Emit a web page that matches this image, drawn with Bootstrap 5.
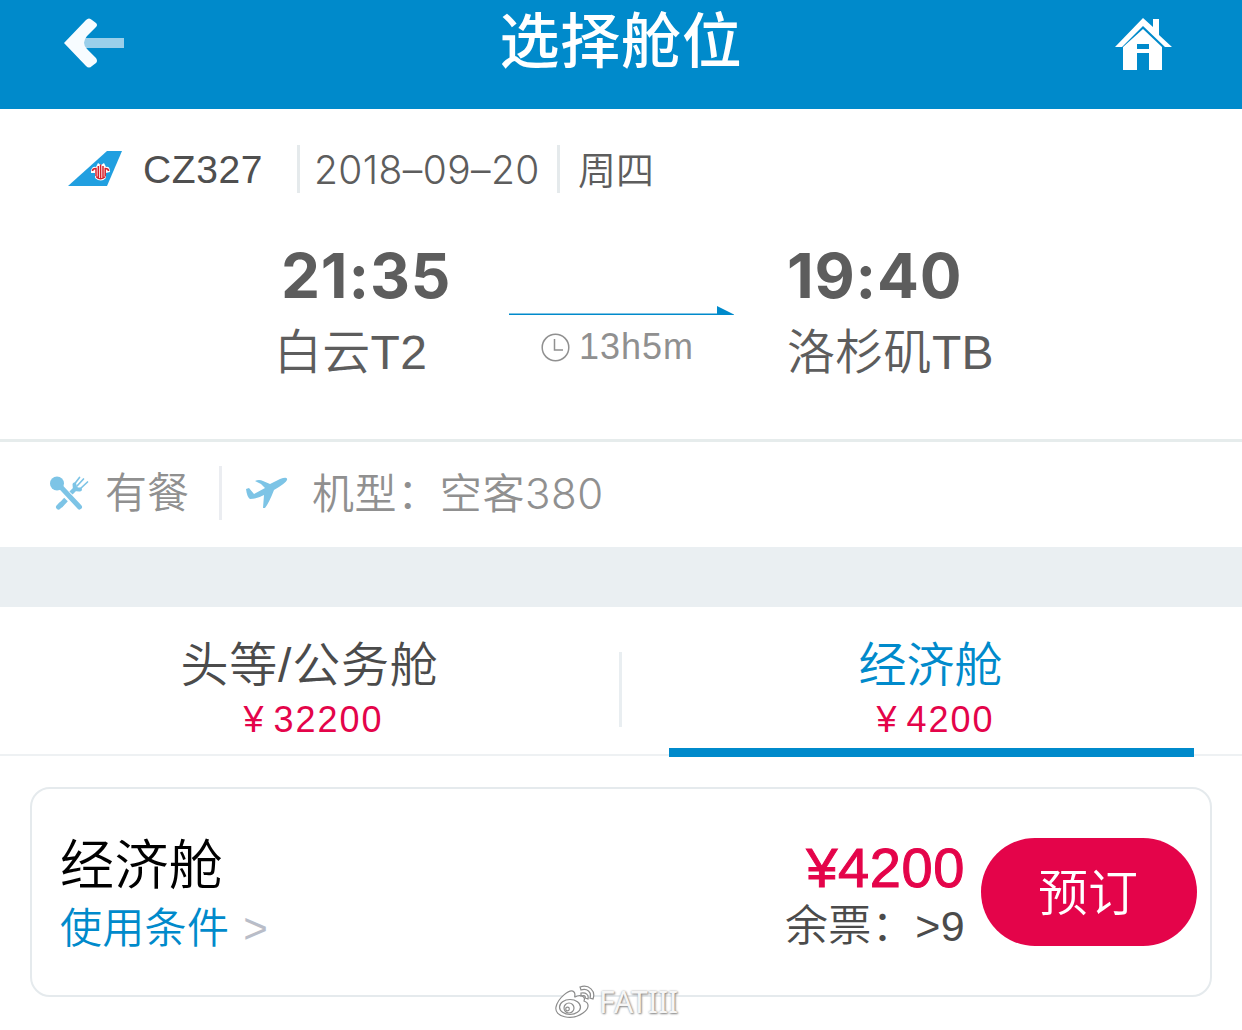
<!DOCTYPE html>
<html lang="zh-CN">

<head>
  <meta charset="UTF-8">
  <meta name="viewport" content="width=device-width, initial-scale=1.0">
  <title>选择舱位</title>
  <link href="https://cdn.jsdelivr.net/npm/bootstrap@5.3.3/dist/css/bootstrap.min.css" rel="stylesheet">
  <style>
    :root {
      --sky: #008acb;
      --rose: #e4044a;
      --line: #e5eaec;
    }

    body {
      font-family: "Liberation Sans", "Noto Sans CJK SC", sans-serif;
      font-weight: 350;
      color: #5d5d5d;
      height: 1030px;
      overflow: hidden;
      white-space: nowrap;
    }

    svg { display: block; flex: none; }

    /* header */
    .top-bar { height: 109px; padding: 0 70px 0 64px; background: var(--sky); }
    .top-bar svg { margin-top: 18px; }
    .page-title { font-size: 60px; font-weight: 500; line-height: 80px; letter-spacing: .8px; padding: 3px 0 0 3px; }

    /* flight summary */
    .flight { height: 333px; border-bottom: 3px solid #e6ecec; }
    .flight-head { height: 48px; margin-top: 36px; padding-left: 68px; font-size: 38px; line-height: 50px; }
    .flight-logo { margin-top: 6px; }
    .flight-no { width: 154px; margin-left: 21px; font-size: 39px; color: #4f4f4f; letter-spacing: .6px; }
    .flight-date { width: 263px; padding-left: 14px; border-left: 3px solid var(--line); border-right: 3px solid var(--line); font-family: Inter, sans-serif; font-size: 39px; font-weight: 300; letter-spacing: .4px; }
    .flight-day { padding: 1px 0 0 18px; }
    .flight-route { margin-top: 48px; padding-left: 274px; }
    .stop-from { width: 235px; }
    .stop-mid { width: 278px; padding-top: 65px; }
    .stop-time { font-family: Inter, sans-serif; font-size: 62px; font-weight: 700; line-height: 70px; letter-spacing: .8px; }
    .stop-from .stop-time { padding-left: 7px; }
    .stop-name { font-size: 48px; line-height: 60px; margin-top: 12px; letter-spacing: .3px; }
    .duration { font-size: 36px; line-height: 40px; color: #909090; margin: 11px 0 0 32px; letter-spacing: 1px; }
    .duration svg { margin-right: 9px; }

    /* meal and aircraft */
    .extras { height: 105px; padding: 0 0 3px 50px; font-size: 42px; color: #909090; }
    .extras-meal { width: 172px; height: 54px; border-right: 3px solid #ebedf1; }
    .extras span { padding-top: 1px; }
    .extras-plane { letter-spacing: .6px; }
    .extras-model { font-family: Inter, sans-serif; }
    .gap-band { height: 60px; background: #eaeff2; }

    /* cabin tabs */
    .cabins { height: 150px; }
    .cabins-line { height: 149px; border-bottom: 2px solid #eef1f3; }
    .cabin { height: 149px; text-align: center; }
    .cabin-name { font-size: 48px; line-height: 60px; margin-top: 29px; color: #4b4b4b; }
    .cabin-first .cabin-name { letter-spacing: .8px; }
    .cabin-price { font-size: 36px; line-height: 40px; margin-top: 4px; padding-left: 8px; color: var(--rose); letter-spacing: 2px; word-spacing: -4px; }
    .cabin-first { width: 619px; }
    .cabin-split { width: 3px; height: 75px; margin-top: 45px; background: #e9eef1; }
    .cabin-eco { width: 525px; height: 150px; margin-left: 47px; border-bottom: 9px solid var(--sky); }
    .cabin-eco .cabin-name { color: var(--sky); margin-right: 2px; }

    /* fare */
    .fare { height: 210px; margin: 30px 30px 0; padding: 0 13px 0 28px; border: 2px solid #e5eaed; border-radius: 20px; }
    .fare-text { padding-top: 8px; }
    .fare-name { font-size: 54px; line-height: 64px; padding-top: 2px; color: #000; letter-spacing: .4px; }
    .fare-rule { font-size: 42px; line-height: 62px; color: var(--sky); letter-spacing: .3px; }
    .fare-more { color: #b9bdc8; margin-left: 2px; }
    .fare-price { font-size: 56px; line-height: 60px; color: var(--rose); letter-spacing: .6px; -webkit-text-stroke: 1px var(--rose); }
    .fare-left { font-size: 43px; line-height: 56px; color: #4b4b4b; letter-spacing: .4px; }
    .book { width: 216px; height: 108px; padding: 9px 14px 6px 12px; background: var(--rose); color: #fff; font-size: 50px; font-weight: 350; line-height: 1; border: 0; }

    .watermark { left: 555px; top: 983px; font: 30px/38px "Noto Sans", sans-serif; color: #f6f6f6; text-shadow: 1px 1px 2px #888, 0 0 2px #aaa; }
  </style>
</head>

<body>
  <header class="top-bar d-flex justify-content-between text-white">
    <svg width="60" height="50" viewBox="0 0 60 50">
      <path d="M19 20H60V30H19Z" fill="#9acfea" />
      <path d="M0 25 22 2Q25-1 28 2L32 5Q34 7 32 9L23 18Q17 25 23 31L32 40Q34 43 32 45L28 48Q25 51 22 48Z" fill="#f7fcff" />
    </svg>
    <h1 class="page-title mb-0">选择舱位</h1>
    <svg width="57" height="54" viewBox="0 0 57 54">
      <path d="M38 1H44V17L57 29H50L28 8 7 29H0L28 0 38 9Z" fill="#fff" />
      <path d="M28 11 47 29V52H34V35H22V52H8V29Z M22 26V31H34V26Z" fill="#fff" fill-rule="evenodd" />
    </svg>
  </header>

  <section class="flight">
    <div class="d-flex flex-column">
      <div class="flight-head d-flex">
        <svg class="flight-logo" width="54" height="36" viewBox="0 0 54 36">
          <path d="M39 0H54L39 35H0Z" fill="#219fe0" />
          <path d="M23 20Q24 15 28 16L30 12 33 14 36 12 38 16Q42 15 42 21L38 22 38 27Q33 32 27 27L27 22 23 22Z" fill="#fff" />
          <path d="M24.500 20Q24.500 17.500 28 17.500V25M30.300 15V27M32.600 13.500V28M35 15V27M37.200 25V17.500Q40.500 17.500 40.500 20M28 25.500Q32.500 30 37.500 25.500" fill="none" stroke="#d8222b" stroke-width="1.500" />
        </svg>
        <span class="flight-no">CZ327</span>
        <span class="flight-date">2018–09–20</span>
        <span class="flight-day">周四</span>
      </div>
      <div class="flight-route d-flex">
        <div class="stop-from">
          <div class="stop-time">21:35</div>
          <div class="stop-name">白云T2</div>
        </div>
        <div class="stop-mid">
          <svg width="226" height="10" viewBox="0 0 226 10">
            <path d="M0 7.500H208V0L225 8.500V9H0Z" fill="#008acb" />
          </svg>
          <div class="duration d-flex align-items-center">
            <svg width="29" height="29" viewBox="0 0 29 29" fill="none" stroke="#909090" stroke-width="1.500">
              <circle cx="14.500" cy="14.500" r="13.300" />
              <path d="M13.500 6V17H22" />
            </svg>
            <span>13h5m</span>
          </div>
        </div>
        <div>
          <div class="stop-time">19:40</div>
          <div class="stop-name">洛杉矶TB</div>
        </div>
      </div>
    </div>
  </section>

  <section class="extras d-flex align-items-center">
    <div class="extras-meal d-flex align-items-center">
      <svg width="39" height="34" viewBox="0 0 39 34">
        <g fill="none" stroke="#7dc4e6" stroke-linecap="round">
          <path d="M8 8 29.500 31" stroke-width="5" />
          <path d="M8.500 31 11 28.500" stroke-width="5" />
          <path d="M10 30 16 23.500" stroke-width="5" stroke-linecap="butt" />
          <path d="M21 17 27 11" stroke-width="4.500" stroke-linecap="butt" />
          <path d="M24.500 8 29.500 1.500M27 10 33.500 3M30 13 37.500 6" stroke-width="1.700" />
          <path d="M24.500 8.500Q24 14 30 13.500" stroke-width="4" />
        </g>
        <circle cx="7" cy="7.500" r="7" fill="#7dc4e6" />
      </svg>
      <span class="ms-3">有餐</span>
    </div>
    <svg class="ms-4" width="42" height="32" viewBox="0 0 42 32">
      <path d="M0 12 3 11 8 17 19 11 15 7 9 4Q13 2 17 4L24 7 34 2Q42-1 41 3 40 6 28 13 23 26 19 31L17 31 18 18Q11 22 4 22 1 20 0 12Z" fill="#7dc4e6" />
    </svg>
    <span class="extras-plane ms-4">机型：空客<span class="extras-model">380</span></span>
  </section>

  <div class="gap-band"></div>

  <nav class="cabins">
    <div class="cabins-line d-flex">
      <div class="cabin cabin-first">
        <div class="cabin-name">头等/公务舱</div>
        <div class="cabin-price">¥ 32200</div>
      </div>
      <div class="cabin-split"></div>
      <div class="cabin cabin-eco">
        <div class="cabin-name">经济舱</div>
        <div class="cabin-price">¥ 4200</div>
      </div>
    </div>
  </nav>

  <section class="fare d-flex align-items-center">
    <div class="fare-text me-auto">
      <div class="fare-name">经济舱</div>
      <div class="fare-rule">使用条件 <span class="fare-more">&gt;</span></div>
    </div>
    <div class="fare-text text-end me-3">
      <div class="fare-price">¥4200</div>
      <div class="fare-left">余票：&gt;9</div>
    </div>
    <button class="book btn rounded-pill" type="button">预订</button>
  </section>

  <div class="watermark position-absolute d-flex align-items-center">
    <svg width="40" height="34" viewBox="0 0 40 34" fill="#fff" stroke="#8c8c8c" stroke-width="1.200">
      <path d="M1 22C3 13 15 3 19 7 21 9 19 12 20 12 25 9 31 11 29 16 35 18 34 24 28 28 17 36-1 32 1 22Z" />
      <ellipse cx="15" cy="22" rx="10.500" ry="7.500" />
      <circle cx="14" cy="23" r="5" />
      <circle cx="12.500" cy="24" r="1.800" />
      <path d="M25 2C34-1 41 6 38 14L35 13C37 7 32 3 26 5ZM26 8C31 7 34 10 33 14L30 13C31 11 29 10 26 11Z" />
    </svg>
    <span class="ms-1">FATIII</span>
  </div>
</body>

</html>
